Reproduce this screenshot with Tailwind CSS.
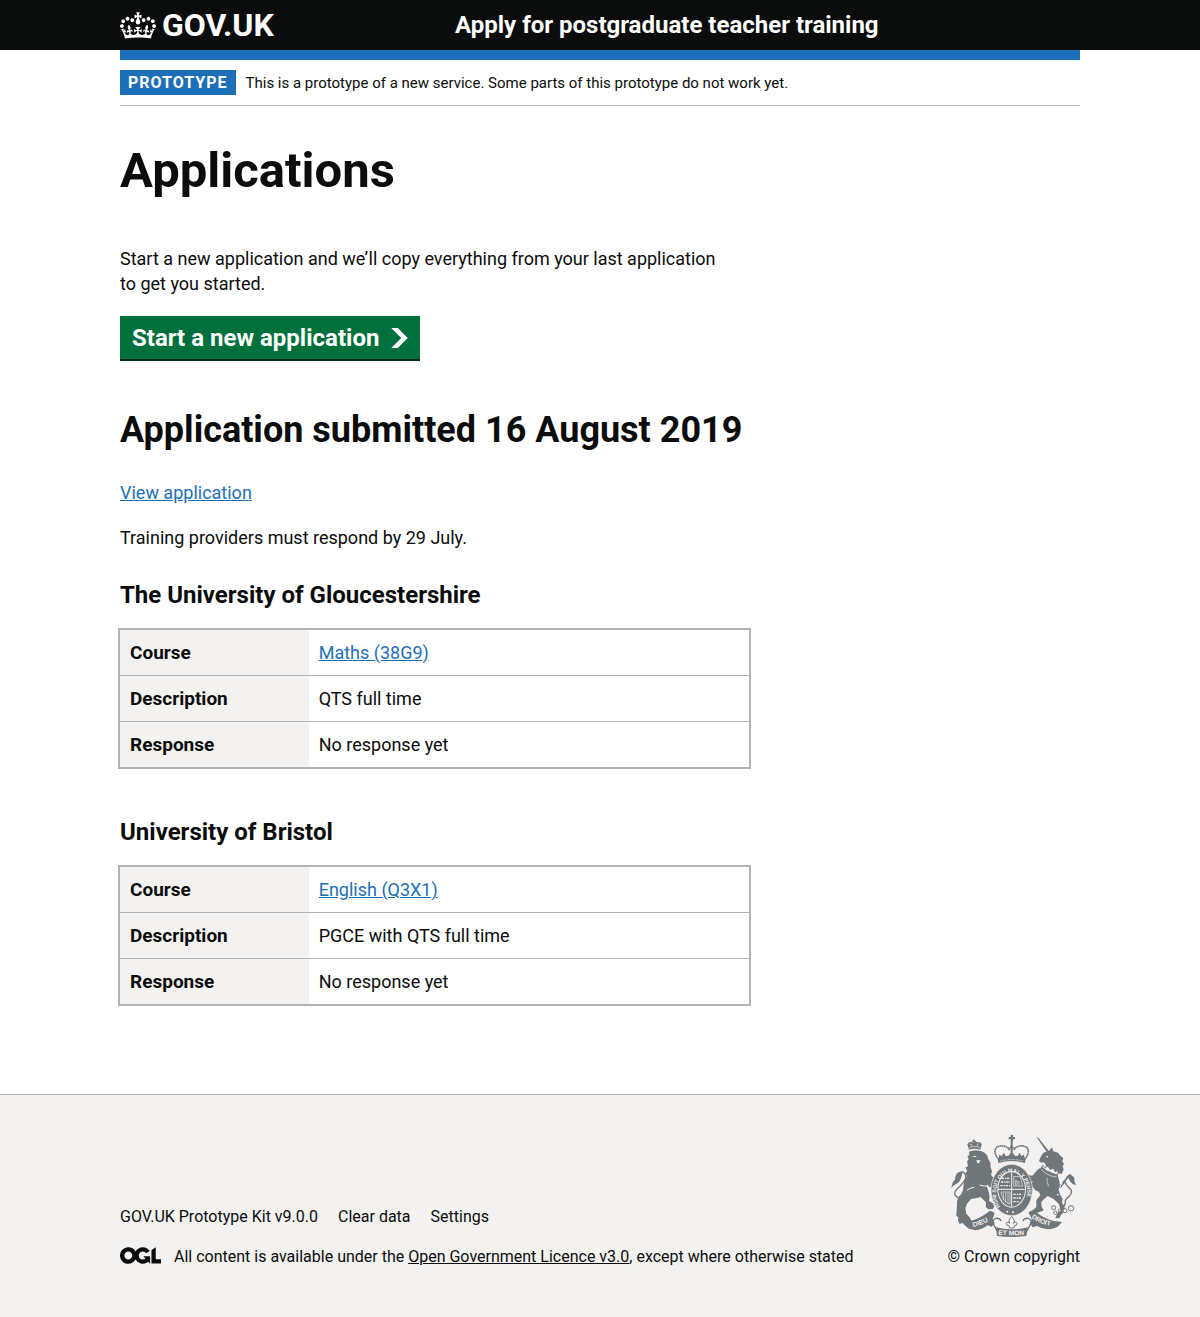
<!DOCTYPE html>
<html lang="en">
<head>
<meta charset="utf-8">
<meta name="viewport" content="width=device-width, initial-scale=1">
<title>Applications - Apply for postgraduate teacher training</title>
<script src="https://cdn.jsdelivr.net/npm/@tailwindcss/browser@4"></script>
</head>
<body class="flex min-h-screen flex-col bg-[#f3f2f1] font-['Roboto',sans-serif] text-[18px] leading-[25px] text-[#0b0c0c]">
<header class="bg-[#0b0c0c] px-4 text-white">
  <div class="mx-auto flex h-[50px] max-w-[960px] items-center">
    <div class="w-1/3 pr-4">
      <a href="#" class="flex items-center gap-[6px] text-[32px] leading-[30px] font-bold">
        <svg class="h-[27px] w-9" viewBox="0 0 132 97" fill="currentColor" aria-hidden="true"><path d="M25 30.2c3.5 1.5 7.7-.2 9.1-3.7 1.5-3.6-.2-7.8-3.9-9.2-3.6-1.4-7.6.3-9.1 3.9-1.4 3.5.3 7.5 3.9 9zM9 39.5c3.6 1.5 7.8-.2 9.2-3.7 1.5-3.6-.2-7.8-3.9-9.1-3.6-1.5-7.6.2-9.1 3.8-1.4 3.5.3 7.5 3.8 9zM4.4 57.2c3.5 1.5 7.7-.2 9.1-3.8 1.5-3.6-.2-7.7-3.9-9.1-3.5-1.5-7.6.3-9.1 3.8-1.4 3.5.3 7.6 3.9 9.1zm38.3-21.4c3.5 1.5 7.7-.2 9.1-3.8 1.5-3.6-.2-7.7-3.9-9.1-3.6-1.5-7.6.3-9.1 3.8-1.3 3.6.4 7.7 3.9 9.1zm64.4-5.6c-3.6 1.5-7.8-.2-9.1-3.7-1.5-3.6.2-7.8 3.8-9.2 3.6-1.4 7.7.3 9.2 3.9 1.3 3.5-.4 7.5-3.9 9zm15.9 9.3c-3.6 1.5-7.7-.2-9.1-3.7-1.5-3.6.2-7.8 3.7-9.1 3.6-1.5 7.7.2 9.2 3.8 1.5 3.5-.3 7.5-3.8 9zm4.7 17.7c-3.6 1.5-7.8-.2-9.2-3.8-1.5-3.6.2-7.7 3.9-9.1 3.6-1.5 7.7.3 9.2 3.8 1.3 3.5-.4 7.6-3.9 9.1zM89.3 35.8c-3.6 1.5-7.8-.2-9.2-3.8-1.4-3.6.2-7.7 3.9-9.1 3.6-1.5 7.7.3 9.2 3.8 1.4 3.6-.3 7.7-3.9 9.1zM69.7 17.7l8.9 4.7V9.3l-8.9 2.8c-.2-.3-.5-.6-.9-.9L72.4 0H59.6l3.5 11.2c-.3.3-.6.5-.9.9l-8.8-2.8v13.1l8.8-4.7c.3.3.6.7.9.9l-5 15.4v.1c-.2.8-.4 1.6-.4 2.4 0 4.1 3.1 7.5 7 8.1h.2c.3 0 .7.1 1 .1.4 0 .7 0 1-.1h.2c4-.6 7.1-4.1 7.1-8.1 0-.8-.1-1.7-.4-2.4V34l-5.1-15.4c.4-.2.7-.6 1-.9zM66 92.8c16.9 0 32.8 1.1 47.1 3.2 4-16.9 8.9-26.7 14-33.5l-9.6-3.4c1 4.9 1.1 7.2 0 10.2-1.5-1.4-3-4.3-4.2-8.7L108.6 76c2.8-2 5-3.2 7.5-3.3-4.4 9.4-10 11.9-13.6 11.2-4.3-.8-6.3-4.6-5.6-7.9 1-4.7 5.7-5.9 8-.5 4.3-8.7-3-11.4-7.6-8.8 7.1-7.2 7.9-13.5 2.1-21.1-8 6.1-8.1 12.3-4.5 20.8-4.7-5.4-12.1-2.5-9.5 6.2 3.4-5.2 7.9-2 7.2 3.1-.6 4.3-6.4 7.8-13.5 7.2-10.3-.9-10.9-8-11.2-13.8 2.5-.5 7.1 1.8 11 7.3L80.2 60c-4.1 4.4-8 5.3-12.3 5.4 1.4-4.4 8-11.6 8-11.6H55.5s6.4 7.2 7.9 11.6c-4.2-.1-8-1-12.3-5.4l1.4 16.4c3.9-5.5 8.5-7.7 10.9-7.3-.3 5.8-.9 12.8-11.1 13.8-7.2.6-12.9-2.9-13.5-7.2-.7-5 3.8-8.3 7.1-3.1 2.7-8.7-4.6-11.6-9.4-6.2 3.7-8.5 3.6-14.7-4.6-20.8-5.8 7.6-5 13.9 2.2 21.1-4.7-2.6-11.9.1-7.7 8.8 2.3-5.5 7.1-4.2 8.1.5.7 3.3-1.3 7.1-5.7 7.9-3.5.7-9-1.8-13.5-11.2 2.5.1 4.7 1.3 7.5 3.3l-4.7-15.4c-1.2 4.4-2.7 7.2-4.3 8.7-1.1-3-.9-5.3 0-10.2l-9.5 3.4c5 6.9 9.9 16.7 14 33.5 14.8-2.1 30.8-3.2 47.7-3.2z"/></svg>
        <span>GOV.UK</span>
      </a>
    </div>
    <a href="#" class="pl-[15px] text-2xl leading-[30px] font-bold">Apply for postgraduate teacher training</a>
  </div>
</header>
<div class="grow bg-white px-4">
  <div class="mx-auto max-w-[960px] border-t-10 border-[#1d70b8]">
    <div class="flex items-center gap-[10px] border-b border-[#b1b4b6] py-[10px]">
      <strong class="bg-[#1d70b8] px-2 text-base leading-[25px] font-bold tracking-[1px] text-white uppercase">Prototype</strong>
      <span class="text-[15px] leading-5">This is a prototype of a new service. Some parts of this prototype do not work yet.</span>
    </div>
    <main class="pt-10 pb-[90px] md:w-[629px]">
      <h1 class="mb-[50px] text-[49px] leading-[50px] font-bold">Applications</h1>
      <p class="mb-5 pr-5">Start a new application and we’ll copy everything from your last application to get you started.</p>
      <button type="button" class="mb-[51px] flex h-[43px] items-center gap-3 bg-[#00703c] px-3 text-2xl font-bold text-white shadow-[0_2px_0_#002d18]">
        Start a new application
        <svg class="h-5 w-[17px]" viewBox="0 0 33 40" fill="currentColor" aria-hidden="true"><path d="M0 0h13l20 20-20 20H0l20-20z"/></svg>
      </button>
      <h2 class="mb-[30px] text-4xl leading-10 font-bold">Application submitted 16 August 2019</h2>
      <p class="mb-5"><a href="#" class="text-[#1d70b8] underline">View application</a></p>
      <p class="mb-[30px]">Training providers must respond by 29 July.</p>

      <h3 class="mb-5 text-2xl leading-[30px] font-bold">The University of Gloucestershire</h3>
      <table class="mb-[50px] w-full border-separate border-spacing-0 text-left outline-2 outline-[#b1b4b6]">
        <tbody>
        <tr class="h-[46px]"><th scope="row" class="w-[30%] border-b border-[#b1b4b6] bg-[#f3f2f1] px-[10px] text-[19px] font-bold">Course</th><td class="border-b border-[#b1b4b6] px-[10px]"><a href="#" class="text-[#1d70b8] underline">Maths (38G9)</a></td></tr>
        <tr class="h-[46px]"><th scope="row" class="border-b border-[#b1b4b6] bg-[#f3f2f1] px-[10px] text-[19px] font-bold">Description</th><td class="border-b border-[#b1b4b6] px-[10px]">QTS full time</td></tr>
        <tr class="h-[45px]"><th scope="row" class="bg-[#f3f2f1] px-[10px] text-[19px] font-bold">Response</th><td class="px-[10px]">No response yet</td></tr>
        </tbody>
      </table>

      <h3 class="mb-5 text-2xl leading-[30px] font-bold">University of Bristol</h3>
      <table class="w-full border-separate border-spacing-0 text-left outline-2 outline-[#b1b4b6]">
        <tbody>
        <tr class="h-[46px]"><th scope="row" class="w-[30%] border-b border-[#b1b4b6] bg-[#f3f2f1] px-[10px] text-[19px] font-bold">Course</th><td class="border-b border-[#b1b4b6] px-[10px]"><a href="#" class="text-[#1d70b8] underline">English (Q3X1)</a></td></tr>
        <tr class="h-[46px]"><th scope="row" class="border-b border-[#b1b4b6] bg-[#f3f2f1] px-[10px] text-[19px] font-bold">Description</th><td class="border-b border-[#b1b4b6] px-[10px]">PGCE with QTS full time</td></tr>
        <tr class="h-[45px]"><th scope="row" class="bg-[#f3f2f1] px-[10px] text-[19px] font-bold">Response</th><td class="px-[10px]">No response yet</td></tr>
        </tbody>
      </table>
    </main>
  </div>
</div>
<footer class="border-t border-[#b1b4b6] px-4 pt-10 pb-[50px] text-base leading-5">
  <div class="mx-auto flex max-w-[960px] flex-wrap items-end justify-between gap-5">
    <div>
      <ul class="mb-5 flex flex-wrap gap-x-5">
        <li><a href="#">GOV.UK Prototype Kit v9.0.0</a></li>
        <li><a href="#">Clear data</a></li>
        <li><a href="#">Settings</a></li>
      </ul>
      <div class="flex gap-[13px]">
        <svg class="h-[17px] w-[41px] shrink-0" viewBox="0 0 483.2 195.7" fill="currentColor" aria-hidden="true"><path d="M421.5 142.8V.1l-50.7 32.3v161.1h112.4v-50.7zm-122.3-9.6A47.12 47.12 0 0 1 221 97.8c0-26 21.1-47.1 47.1-47.1 16.7 0 31.4 8.7 39.7 21.8l42.7-27.2A97.63 97.63 0 0 0 268.1 0c-36.5 0-68.3 20.1-85.1 49.7A98 98 0 0 0 97.8 0C43.9 0 0 43.9 0 97.8s43.9 97.8 97.8 97.8c36.5 0 68.3-20.1 85.1-49.7a97.76 97.76 0 0 0 149.6 25.4l19.4 22.2h3v-87.8h-80l24.3 27.5zM97.8 145c-26 0-47.1-21.1-47.1-47.1s21.1-47.1 47.1-47.1 47.1 21.1 47.1 47.1S123.8 145 97.8 145"/></svg>
        <span>All content is available under the <a href="#" class="underline">Open Government Licence v3.0</a>, except where otherwise stated</span>
      </div>
    </div>
    <a href="#" class="flex flex-col items-center gap-[10px]">
      <svg class="h-[102px] w-[125px]" viewBox="36 30 375 306" fill="#6f777b" aria-hidden="true">
        <!-- lion and its crown -->
        <path d="M90 74 85 58q4-9 12-7l8 2 6-3 6 2q11-2 11 7l-4 15q-18-5-34 0z"/>
        <path d="M91 67q16-6 32 0M93 56q1 6 8 5M118 55q0 6-6 6" fill="none" stroke="#f3f2f1" stroke-width="2"/>
        <path d="M103 43h4v4h4v4h-4v5h-4v-5h-4v-4h4z"/>
        <path d="M90 80q16-8 35-2l10 4 9 9 4 12 6 10 1 14 4 12-3 10 6 8 12 10-2 22-20-3-10-5 8 22-2 8-35 8-17 3-12 14-5 14 3 16 11 12 6 12-6 8-14 4-8-8-9 3-5-10 1-10-6-5 2-32q-2-22 14-34l4-12 3-22 8-19-4-8 6-8-6-9 8-5-3-13 5-8-4-8 6-4z"/>
        <path d="M116 200l30-6 6 20-2 14 12 7 4 10-4 7-14 1-8-7 1-14-17-17z"/>
        <path d="M99 95l9-3 6 5M122 93l7-1M112 106l12-1-4 10-5-1z" fill="#f3f2f1"/>
        <path d="M122 180q14 6 27 2M84 196q8-8 22-9" fill="none" stroke="#f3f2f1" stroke-width="3"/>
        <path d="M76 222q-14 0-22-6-14-9 0-24 20-17 26-32 2-14-7-18-9-2-13 4" fill="none" stroke="#6f777b" stroke-width="4"/>
        <path d="M53 146q-6 10-5 18l-7 8-4 17q5-8 14-12 12-6 15-18 4-10 5-19-10-2-18 6z"/>
        <!-- royal crown -->
        <path d="M215 30h7v6h6v7h-6v7h-7v-7h-6v-7h6zM178 114l-2-14q42-16 84 0l-2 14q-40-12-80 0z"/>
        <path d="M179 102q-11-11-11-24 2-13 15-15 20-2 27 10l8-10 8 10q7-12 27-10 13 2 15 15 0 13-11 24" fill="none" stroke="#6f777b" stroke-width="5" stroke-dasharray="5 1"/>
        <path d="M215 50h6v50h-6zM179 102l2-13 8 4 5-10 6 10h8l5-7 5-7 5 7 5 7h8l6-10 5 10 8-4 2 13q-39-10-78 0z"/>
        <path d="M184 108q34-9 68 0" fill="none" stroke="#f3f2f1" stroke-width="2" stroke-dasharray="5 3"/>
        <!-- unicorn -->
        <path d="M293 37l5 1 32 41-5 5z"/>
        <path d="M300 108l5-12 8-13 17-6 9-10 4 12 14 4 7 9 9 8-3 9 5 8-4 7 3 9-6 14-10-2-20-11-15-9-8-13-8 1z"/>
        <path d="M320 93l8 1-4 4z" fill="#f3f2f1"/>
        <path d="M311 121l8 7 8-5 7 11 9-5 5 11 9-4 0 11-7 4-44-21z" fill="#f3f2f1" stroke="#6f777b" stroke-width="3"/>
        <path d="M298 132l12-6 14 11 32 12 6 24-3 21 4 14 8 14-2 12 8 10-2 17-10 10-3 8-13 1 5-14 10-14-4-14-16-16-18-9-10 8-9 10 1 14 6 11-9 4-20 6-14 3-2-7 14-8 9-8 0-20 12-16-4-9-12-6-7-11-2 22-8 3-5-10 5-22 12-7-14-2-14 1-4-8 15-11 14 2z"/>
        <path d="M366 244q12 2 13-12-2-10 12-18 10-12 5-20-16-14-19-28" fill="none" stroke="#6f777b" stroke-width="4"/>
        <path d="M369 182q0-14 10-20 6-14 15-15l12 11 0 10 5 13q-12-3-18-12-3-8-4-10-10 6-12 16l-7 8z"/>
        <path d="M307 133q18 21 46 23M324 158q-2 12 5 26" fill="none" stroke="#f3f2f1" stroke-width="2"/>
        <g fill="#f3f2f1" stroke="#6f777b" stroke-width="3"><circle cx="344" cy="248" r="6"/><circle cx="349" cy="263" r="5"/><circle cx="362" cy="256" r="4"/><circle cx="378" cy="257" r="6"/><circle cx="396" cy="250" r="8"/><circle cx="357" cy="209" r="4"/><circle cx="364" cy="183" r="4"/></g>
        <!-- garter and quartered shield -->
        <ellipse cx="218" cy="195" rx="62" ry="77" stroke="#f3f2f1" stroke-width="2"/>
        <ellipse cx="218" cy="193" rx="43" ry="55" fill="#f3f2f1"/>
        <ellipse cx="218" cy="193" rx="40" ry="52"/>
        <path d="M218 140v105M178 193h80" stroke="#f3f2f1" stroke-width="3"/>
        <path d="M188 160h25M186 171h27M184 182h29M223 208h27M223 219h24M223 230h18" stroke="#f3f2f1" stroke-width="4" stroke-dasharray="7 3 4 2"/>
        <path d="M224 155h20l7 28h-27zM186 201h27v37q-22-8-27-37z" fill="none" stroke="#f3f2f1" stroke-width="2"/>
        <path d="M230 181v-15l5 3-1 12M240 181v-13M193 226v-22M200 233v-30M207 236v-34" fill="none" stroke="#f3f2f1" stroke-width="2"/>
        <path id="garter" d="M184 245A47 61 0 1 1 252 245" fill="none"/>
        <text fill="#f3f2f1" font-family="Liberation Sans" font-weight="700" font-size="16"><textPath href="#garter">HONI SOIT QUI MAL Y PENSE</textPath></text>
        <circle cx="205" cy="260" r="3" fill="#f3f2f1"/><circle cx="222" cy="262" r="3" fill="#f3f2f1"/>
        <!-- motto ribbon -->
        <path d="M69 291q42 0 84-34l14 6-6 20 6 12-9 10-12-4q-30 24-60 8zM369 291q-42 0-84-34l-16 4 9 22-4 12 6 12 14-4q30 18 62 2z"/>
        <path d="M171 307q47 12 96 0l-5 26q-44 6-88 0z"/>
        <path d="M174 318l-8-16q-10-16 4-22 12-2 16 8M264 318l8-16q10-16-4-22-12-2-16 8" fill="none" stroke="#6f777b" stroke-width="4"/>
        <path d="M218 274q13 14 5 21 6-8 12 0-2 8-9 7l-2 7h-12l-2-7q-7 1-9-7 6-8 12 0-8-7 5-21z" fill="#f3f2f1" stroke="#6f777b" stroke-width="3"/>
        <path id="dieu" d="M103 306Q135 299 162 280" fill="none"/>
        <path id="etmon" d="M176 329q43 4 92 0" fill="none"/>
        <path id="droit" d="M277 278Q303 300 352 305" fill="none"/>
        <g fill="#f3f2f1" font-family="Liberation Sans" font-weight="700" font-size="20"><text><textPath href="#dieu">DIEU</textPath></text><text><textPath href="#etmon" startOffset="2">ET MON</textPath></text><text><textPath href="#droit">DROIT</textPath></text></g>
      </svg>
      <span>© Crown copyright</span>
    </a>
  </div>
</footer>
</body>
</html>
